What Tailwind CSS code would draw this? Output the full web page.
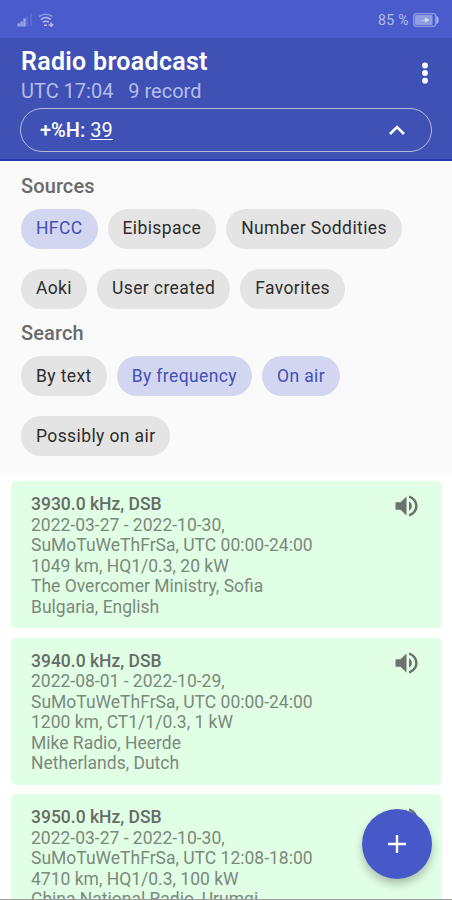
<!DOCTYPE html>
<html lang="en">
<head>
  <meta charset="UTF-8" />
  <meta name="viewport" content="width=device-width, initial-scale=1.0" />
  <title>Radio broadcast</title>
  <script src="https://cdn.jsdelivr.net/npm/@tailwindcss/browser@4"></script>
</head>
<body class="relative h-[900px] overflow-hidden bg-white font-[Roboto,sans-serif]">

  <!-- Status bar -->
  <div class="flex h-[38px] items-center justify-between bg-[#4a5ccb] pl-[17px] pr-[13px] pt-[2px] text-[#b4bcee]">
    <div class="flex items-center gap-[6px]">
      <svg class="h-[14px] w-[15px]" viewBox="0 0 15 14" fill="currentColor">
        <path d="M.5 10.500h2.400v3H.5zM3.400 8.500h2.400v5H3.400zM6.300 5.500h2.400v8H6.300z" opacity=".8" />
        <path d="M9.200 3.500h1.400v10H9.200zM13.400 0h1.300v13.500h-1.300z" opacity=".25" />
      </svg>
      <svg class="h-[14px] w-4" viewBox="0 0 16 14" fill="none" stroke="currentColor" stroke-width="1.500">
        <path d="M1 3.700C5 .4 10.500.4 14.500 3.700" opacity=".6" />
        <path d="M2.800 6.600c3-2.400 7-2.400 10 0M5 9.200c2-1.400 4-1.400 6 0" />
        <path d="M6 12.200h3M10.500 12h4M12.500 9.800l2.200 2.200-2.200 1.800" />
      </svg>
    </div>
    <div class="flex items-center gap-1">
      <span class="text-[14px] tracking-[0.4px]">85 %</span>
      <svg class="h-[14px] w-[26px]" viewBox="0 0 26 14">
        <rect x=".7" y=".7" width="22" height="12.600" rx="2.500" fill="none" stroke="#8f9ce2" stroke-width="1.300" />
        <rect x="2" y="2" width="17.500" height="10" rx="1" fill="#929fe3" />
        <path d="M24 3.500c1.500 1.500 1.500 5.500 0 7z" fill="#b4bcee" stroke="#b4bcee" />
        <path d="M7 7.300l5-.6V4.800l4.500 2.200-4.500 2.200V7.500z" fill="#dde1fa" />
      </svg>
    </div>
  </div>

  <!-- App bar -->
  <header class="h-[123px] border-b-2 border-[#2438ad] bg-[#3f51b5] px-5">
    <div class="flex h-[70px] justify-between">
      <div class="pt-[9px] pl-px">
        <h1 class="text-[25px] leading-[30px] font-semibold tracking-[0.3px] text-white">Radio broadcast</h1>
        <p class="text-[20px] leading-[29px] whitespace-pre text-[#b4bdea]">UTC 17:04   9 record</p>
      </div>
      <svg class="mt-[24px] mr-[3px] h-[22px] w-2" viewBox="0 0 8 22" fill="#fff">
        <circle cx="4" cy="3.500" r="2.900" />
        <circle cx="4" cy="11" r="2.900" />
        <circle cx="4" cy="18.700" r="2.900" />
      </svg>
    </div>
    <div class="flex h-[44px] items-center justify-between rounded-full border-[1.5px] border-[#b3b9dd] pl-[19px] pr-[26px] text-white">
      <span class="text-[20px] font-medium">+%H: <span class="font-normal underline decoration-1 underline-offset-2">39</span></span>
      <svg class="h-[11px] w-4" viewBox="0 0 16 11" fill="none" stroke="#fff" stroke-width="2.600">
        <path d="M1 9l7-7 7 7" />
      </svg>
    </div>
  </header>

  <!-- Filters -->
  <section class="h-[315px] bg-[#fafafa] px-[21px] pt-[12.500px] text-[17.5px] tracking-[0.39px] text-[#2d2d2d]">
    <h2 class="h-[35px] text-[20px] leading-6 font-medium tracking-[0.1px] text-[#6a6a6a]">Sources</h2>
    <div class="flex flex-wrap gap-x-[10px] gap-y-[20px]">
      <span class="flex h-10 items-center rounded-full bg-[#d2d6f0] px-[15px] text-[#4350b8]">HFCC</span>
      <span class="flex h-10 items-center rounded-full bg-[#e4e4e4] px-[15px]">Eibispace</span>
      <span class="flex h-10 items-center rounded-full bg-[#e4e4e4] px-[15px]">Number Soddities</span>
      <span class="flex h-10 items-center rounded-full bg-[#e4e4e4] px-[15px]">Aoki</span>
      <span class="flex h-10 items-center rounded-full bg-[#e4e4e4] px-[15px]">User created</span>
      <span class="flex h-10 items-center rounded-full bg-[#e4e4e4] px-[15px]">Favorites</span>
    </div>
    <h2 class="mt-[12.500px] h-[35px] text-[20px] leading-6 font-medium tracking-[0.1px] text-[#6a6a6a]">Search</h2>
    <div class="flex flex-wrap gap-x-[10px] gap-y-[20px]">
      <span class="flex h-10 items-center rounded-full bg-[#e4e4e4] px-[15px]">By text</span>
      <span class="flex h-10 items-center rounded-full bg-[#d2d6f0] px-[15px] text-[#4350b8]">By frequency</span>
      <span class="flex h-10 items-center rounded-full bg-[#d2d6f0] px-[15px] text-[#4350b8]">On air</span>
      <span class="flex h-10 items-center rounded-full bg-[#e4e4e4] px-[15px]">Possibly on air</span>
    </div>
  </section>

  <!-- Broadcast list -->
  <main class="flex flex-col gap-[9.5px] pt-[5px] pr-[10px] pl-[11px] text-[17.5px] leading-[20.5px] text-[#7d887e]">
    <article class="flex h-[147px] shrink-0 justify-between rounded-[5px] bg-[#e0ffe5] pt-[13px] pr-[22px] pl-5">
      <div>
        <h3 class="font-medium text-[#666c66]">3930.0 kHz, DSB</h3>
        <p>2022-03-27 - 2022-10-30,</p>
        <p>SuMoTuWeThFrSa, UTC 00:00-24:00</p>
        <p>1049 km, HQ1/0.3, 20 kW</p>
        <p>The Overcomer Ministry, Sofia</p>
        <p>Bulgaria, English</p>
      </div>
      <svg class="h-[24px] w-[26px]" viewBox="0 0 26 24" fill="#6f716f">
        <path d="M1.500 8.300v7.400h5l6 5.800V2.500l-6 5.800zM15 7.500v9c1.800-.9 2.900-2.600 2.900-4.500S16.800 8.400 15 7.500zM15 1.500v2.600c3.600 1 6.100 4.100 6.100 7.900s-2.500 6.900-6.100 7.900v2.600c5-1.100 8.600-5.400 8.600-10.500S20 2.600 15 1.500z" />
      </svg>
    </article>
    <article class="flex h-[147px] shrink-0 justify-between rounded-[5px] bg-[#e0ffe5] pt-[13px] pr-[22px] pl-5">
      <div>
        <h3 class="font-medium text-[#666c66]">3940.0 kHz, DSB</h3>
        <p>2022-08-01 - 2022-10-29,</p>
        <p>SuMoTuWeThFrSa, UTC 00:00-24:00</p>
        <p>1200 km, CT1/1/0.3, 1 kW</p>
        <p>Mike Radio, Heerde</p>
        <p>Netherlands, Dutch</p>
      </div>
      <svg class="h-[24px] w-[26px]" viewBox="0 0 26 24" fill="#6f716f">
        <path d="M1.500 8.300v7.400h5l6 5.800V2.500l-6 5.800zM15 7.500v9c1.800-.9 2.900-2.600 2.900-4.500S16.800 8.400 15 7.500zM15 1.500v2.600c3.600 1 6.100 4.100 6.100 7.900s-2.500 6.900-6.100 7.900v2.600c5-1.100 8.600-5.400 8.600-10.500S20 2.600 15 1.500z" />
      </svg>
    </article>
    <article class="flex h-[147px] shrink-0 justify-between rounded-[5px] bg-[#e0ffe5] pt-[13px] pr-[22px] pl-5">
      <div>
        <h3 class="font-medium text-[#666c66]">3950.0 kHz, DSB</h3>
        <p>2022-03-27 - 2022-10-30,</p>
        <p>SuMoTuWeThFrSa, UTC 12:08-18:00</p>
        <p>4710 km, HQ1/0.3, 100 kW</p>
        <p>China National Radio, Urumqi</p>
      </div>
      <svg class="h-[24px] w-[26px]" viewBox="0 0 26 24" fill="#6f716f">
        <path d="M1.500 8.300v7.400h5l6 5.800V2.500l-6 5.800zM15 7.500v9c1.800-.9 2.900-2.600 2.900-4.500S16.800 8.400 15 7.500zM15 1.500v2.600c3.600 1 6.100 4.100 6.100 7.900s-2.500 6.900-6.100 7.900v2.600c5-1.100 8.600-5.400 8.600-10.500S20 2.600 15 1.500z" />
      </svg>
    </article>
  </main>

  <!-- Add button -->
  <button class="absolute right-5 bottom-[21px] flex size-[70px] items-center justify-center rounded-full bg-[#4759c8] shadow-[0_5px_9px_rgba(0,0,0,0.25)]">
    <svg class="size-[18px]" viewBox="0 0 18 18" stroke="#fff" stroke-width="2.400">
      <path d="M9 0v18M0 9h18" />
    </svg>
  </button>

  <div class="absolute inset-x-0 bottom-0 h-[1.5px] bg-[#9a9f9b]"></div>
</body>
</html>
